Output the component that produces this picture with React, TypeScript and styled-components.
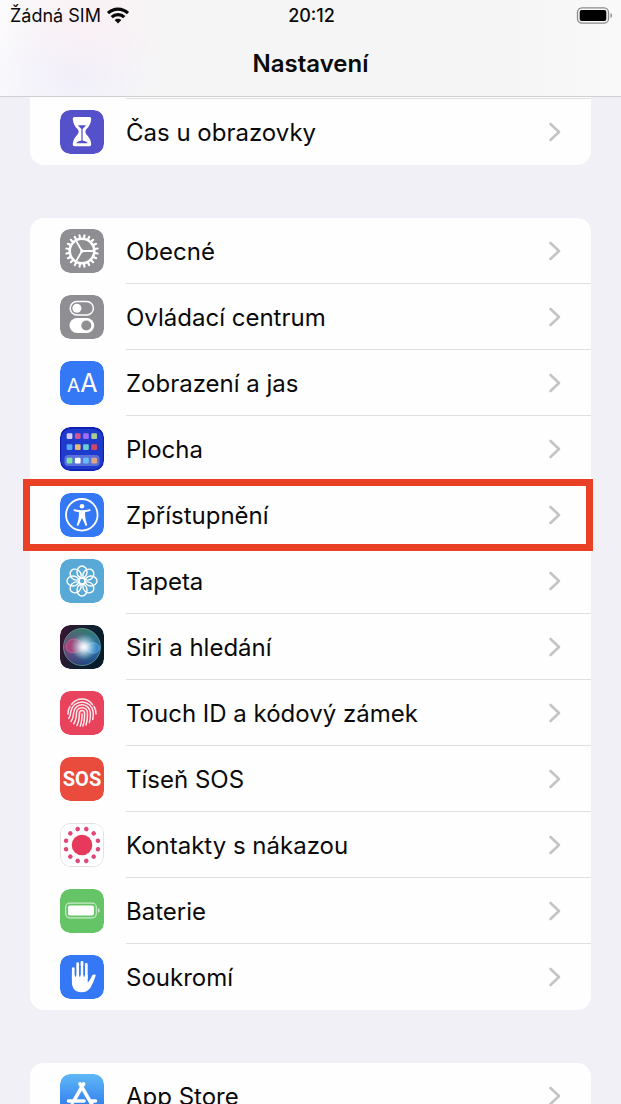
import React from "react";
import styled, { createGlobalStyle } from "styled-components";

const GlobalStyle = createGlobalStyle`
  *, *::before, *::after { box-sizing: border-box; }
  body {
    margin: 0;
    background: #f1f0f6;
    color: #0a0a0a;
    font-family: Inter, "Noto Sans", sans-serif;
  }
`;

const Screen = styled.div`
  display: flex;
  flex-direction: column;
  height: 100vh;
  overflow: hidden;
`;

const Header = styled.header`
  flex: none;
  background:
    radial-gradient(ellipse 90px 70px at 90px 20px, rgba(252, 236, 242, 0.6), transparent),
    radial-gradient(ellipse 90px 70px at 72px 76px, rgba(238, 236, 250, 0.8), transparent),
    linear-gradient(90deg, #fbfafc, #f5f5f5 30%, #f5f5f5 80%, #f9f9fa);
  border-bottom: 1px solid #cfcfd4;
`;

const StatusBar = styled.div`
  display: grid;
  grid-template-columns: 1fr auto 1fr;
  align-items: center;
  height: 32px;
  padding: 0 8px 0 10px;
  font-size: 18px;
  line-height: 20px;
`;

const Carrier = styled.span`
  display: flex;
  align-items: center;
  gap: 5px;
`;

const Clock = styled.time`
  font-weight: 500;
`;

const BatteryStatus = styled.span`
  display: flex;
  justify-content: flex-end;
`;

const Title = styled.h1`
  margin: 0;
  padding: 17px 0;
  font-size: 24px;
  line-height: 30px;
  font-weight: 600;
  text-align: center;
`;

const Content = styled.main`
  flex: 1;
  min-height: 0;
  overflow-y: auto;
  scrollbar-width: none;
  padding: 0 30px;
  display: flex;
  flex-direction: column;
  gap: 53px;
`;

const Group = styled.ul<{ $continued?: boolean }>`
  flex: none;
  margin: 0;
  padding: ${(p) => (p.$continued ? "2px 0 0" : "0")};
  list-style: none;
  background: #fefefe;
  border-radius: ${(p) => (p.$continued ? "0 0 14px 14px" : "14px")};
`;

const Item = styled.li`
  position: relative;
`;

const RowLink = styled.a`
  display: flex;
  height: 66px;
  padding-left: 30px;
  gap: 22px;
  align-items: center;
  color: inherit;
  text-decoration: none;
`;

const RowBody = styled.span<{ $line?: boolean }>`
  flex: 1;
  align-self: stretch;
  display: flex;
  align-items: center;
  justify-content: space-between;
  padding-right: 30px;
  box-shadow: ${(p) => (p.$line ? "0 -1px #e0e0e2" : "none")};
`;

const Label = styled.span`
  padding-top: 2px;
  font-size: 24px;
  line-height: 30px;
`;

const Highlight = styled.div`
  position: absolute;
  z-index: 1;
  inset: -3px -2px -3px -7px;
  border: 7px solid #ea4025;
  pointer-events: none;
`;

const IconSvg = styled.svg`
  flex: none;
  display: block;
  width: 44px;
  height: 44px;
  border-radius: 10px;
`;

const Tile = ({ bg, children }: { bg: string; children: React.ReactNode }) => (
  <IconSvg viewBox="0 0 44 44" aria-hidden="true">
    <rect width="44" height="44" rx="10" fill={bg} />
    {children}
  </IconSvg>
);

const around = (count: number, offset = 0) =>
  Array.from({ length: count }, (_, i) => offset + (i * 360) / count);

const ScreenTimeIcon = () => (
  <Tile bg="#5451ca">
    <path
      d="M14.500 7h15c1.300 0 1.900 1 1.700 2.300-.5 4.700-2.300 7.300-4.700 9.800-1.500 1.600-1.500 3.800 0 5.400 2.400 2.500 4.200 4.900 4.700 9.200.2 1.400-.4 2.500-1.700 2.500h-15c-1.300 0-1.900-1.100-1.700-2.500.5-4.300 2.300-6.700 4.700-9.200 1.500-1.600 1.500-3.800 0-5.400-2.400-2.500-4.200-5.100-4.700-9.800C12.600 8 13.200 7 14.500 7z"
      fill="#fff"
    />
    <path d="M18 15.200h8c-.8 1.500-2.600 2.300-3.200 4v11.200c2 .5 4.200 1 5 2.800H16.200c.8-1.800 3-2.300 5-2.800V19.200c-.6-1.700-2.400-2.500-3.200-4z" fill="#5451ca" />
    <path d="M22 18.500v12" stroke="#fff" strokeWidth=".5" />
  </Tile>
);

const GeneralIcon = () => (
  <Tile bg="#8e8e93">
    <g stroke="#fff" fill="none">
      <circle cx="22" cy="22" r="12.300" strokeWidth="2.600" />
      {around(20, 9).map((a) => (
        <path key={a} d="M22 9V6.200" strokeWidth="2.200" strokeLinecap="round" transform={`rotate(${a} 22 22)`} />
      ))}
      <path d="M22 22h12M22 22l-6-10.400M22 22l-6 10.400" strokeWidth="1.800" />
    </g>
    <circle cx="22" cy="22" r="1.800" fill="#fff" />
  </Tile>
);

const ControlCentreIcon = () => (
  <Tile bg="#8e8e93">
    <rect x="10.200" y="6.600" width="23.200" height="13.400" rx="6.700" fill="none" stroke="#fff" strokeWidth="1.500" />
    <circle cx="16.900" cy="13.300" r="4.500" fill="#fff" />
    <rect x="9.500" y="23" width="24.700" height="15" rx="7.500" fill="#fff" />
    <circle cx="26.300" cy="30.500" r="5" fill="#8e8e93" />
  </Tile>
);

const DisplayIcon = () => (
  <Tile bg="#3478f6">
    <g fill="#fff" fontFamily="Inter, sans-serif" textAnchor="middle">
      <text x="13.500" y="31" fontSize="19">A</text>
      <text x="28.800" y="31" fontSize="25">A</text>
    </g>
  </Tile>
);

const homeTiles = [
  { y: 6.3, colors: ["#cfd0ff", "#d2568f", "#a06cf6", "#a8cf92"] },
  { y: 17.3, colors: ["#55a8fb", "#e9b872", "#6bcfd0", "#cf4763"] },
  { y: 30.7, colors: ["#7ee3a4", "#ffffff", "#68bdfb", "#e0a684"] },
];

const HomeScreenIcon = () => (
  <Tile bg="#0f1fb4">
    <rect x="1.200" y="2" width="41.600" height="40.500" rx="9" fill="#1f3bcb" />
    <rect x="4.500" y="28" width="35" height="11" rx="3.500" fill="#5a70da" />
    {homeTiles.map((row) =>
      row.colors.map((c, i) => (
        <rect key={c} x={6.7 + i * 8.2} y={row.y} width="5.700" height="5.700" rx="1.200" fill={c} />
      )),
    )}
  </Tile>
);

const AccessibilityIcon = () => (
  <Tile bg="#3478f6">
    <circle cx="21.800" cy="21.800" r="15.800" fill="none" stroke="#fff" strokeWidth="1.800" />
    <circle cx="22" cy="13.200" r="2.300" fill="#fff" />
    <path
      d="M14.300 16.300c2.600.6 5 1 7.700 1s5.100-.4 7.700-1c1.100-.2 1.300 1.300.2 1.600-1.700.5-3.300.8-4.800 1.100v3.500c.3 3.200.9 6.100 2 9.100.4 1.200-1.200 1.700-1.700.6L22.300 25.500h-.6l-3.100 6.700c-.5 1.100-2.100.6-1.700-.6 1.100-3 1.700-5.900 2-9.100V19c-1.500-.3-3.100-.6-4.800-1.100-1.100-.3-.9-1.800.2-1.600z"
      fill="#fff"
    />
  </Tile>
);

const WallpaperIcon = () => (
  <Tile bg="#59a9d6">
    <g fill="none" stroke="#fff" strokeWidth="1.400">
      {around(8).map((a) => (
        <ellipse key={a} cx="22" cy="13" rx="5" ry="6" transform={`rotate(${a} 22 22)`} />
      ))}
      <circle cx="22" cy="22" r="3" />
    </g>
  </Tile>
);

const SiriIcon = () => (
  <IconSvg viewBox="0 0 44 44" aria-hidden="true">
    <defs>
      <linearGradient id="siriBg" x1="0" y1="0" x2="1" y2=".3">
        <stop offset="0" stopColor="#3b1430" />
        <stop offset=".5" stopColor="#192032" />
        <stop offset="1" stopColor="#071c2b" />
      </linearGradient>
      <linearGradient id="siriOrb" x1="0" y1=".4" x2="1" y2=".6">
        <stop offset="0" stopColor="#a52362" />
        <stop offset=".4" stopColor="#74517d" />
        <stop offset=".65" stopColor="#387294" />
        <stop offset="1" stopColor="#1d60ac" />
      </linearGradient>
      <linearGradient id="siriTop" x1="0" y1="0" x2="0" y2="1">
        <stop offset="0" stopColor="#2a7e62" stopOpacity=".85" />
        <stop offset=".5" stopColor="#3c7aa0" stopOpacity=".3" />
        <stop offset="1" stopColor="#1b2f72" stopOpacity=".75" />
      </linearGradient>
      <radialGradient id="siriGlow">
        <stop offset="0" stopColor="#fff" />
        <stop offset=".3" stopColor="#eefaff" stopOpacity=".8" />
        <stop offset="1" stopColor="#9be2ed" stopOpacity="0" />
      </radialGradient>
    </defs>
    <rect width="44" height="44" rx="10" fill="url(#siriBg)" />
    <circle cx="22" cy="22" r="18.500" fill="url(#siriOrb)" />
    <circle cx="22" cy="22" r="18.500" fill="url(#siriTop)" stroke="#68a99f" strokeOpacity=".7" strokeWidth="1" />
    <path d="M25 23C20 11 7 12 6 21c0 9 11 8 19 2z" fill="#d73e78" fillOpacity=".5" stroke="#e77fa8" strokeOpacity=".6" strokeWidth=".8" />
    <path d="M24 23c5-7 14-7 15.500 0-2 7-9 7-15.500 0z" fill="#4499e4" fillOpacity=".6" stroke="#8cc6f0" strokeOpacity=".6" strokeWidth=".8" />
    <circle cx="24" cy="22" r="13" fill="url(#siriGlow)" />
  </IconSvg>
);

const TouchIdIcon = () => (
  <Tile bg="#e9425c">
    <g fill="none" stroke="#ffe9ec" strokeWidth="1.500" strokeLinecap="round">
      <path d="M11.500 13.500C14 10 17.800 8 22 8s8 2 10.500 5.500" />
      <path d="M8 23c0-3 .6-5.400 2-7.600M36 23c0-3-.6-5.400-2-7.600" />
      <path d="M8.700 27.500c2-2.500 1.700-4.500 2-6.500C11.500 15 16.200 10.900 22 10.900S32.500 15 33.200 21c.2 2.500.2 5-.5 7.500" />
      <path d="M11 30.500c2.300-3 2.500-5.500 2.600-8.500.2-4.800 3.900-8.200 8.400-8.200s8.200 3.400 8.400 8.200c.1 3.300 0 6.300-1 9.500" />
      <path d="M13.800 32.800c2.500-4 2.600-7 2.700-10.800.1-3.200 2.500-5.300 5.500-5.300s5.400 2.100 5.500 5.300c.1 4.500-.2 8.300-1.500 12" />
      <path d="M17 34.500c2.300-4.500 2.400-8 2.400-12 0-1.800 1.100-2.900 2.600-2.900s2.600 1.100 2.600 2.900c0 4.500-.1 8.500-1.700 12.500" />
      <path d="M22 23c0 4.500-.2 8.500-1.800 12.300" />
    </g>
  </Tile>
);

const SosIcon = () => (
  <Tile bg="#e94b3c">
    <text x="22" y="29" fill="#fff" fontFamily="Roboto, sans-serif" fontWeight="700" fontSize="20" textAnchor="middle">
      SOS
    </text>
  </Tile>
);

const ExposureIcon = () => (
  <IconSvg viewBox="0 0 44 44" aria-hidden="true">
    <rect x=".5" y=".5" width="43" height="43" rx="9.500" fill="#fff" stroke="#e2e2e4" />
    <circle cx="22" cy="22" r="10.300" fill="#e6395c" />
    {around(12, 15).map((a) => (
      <circle key={a} cx="22" cy="5.500" r="2.300" fill="#dd4a78" transform={`rotate(${a} 22 22)`} />
    ))}
  </IconSvg>
);

const BatteryIcon = () => (
  <Tile bg="#65c466">
    <rect x="5.700" y="14.200" width="30.600" height="14.600" rx="4" fill="none" stroke="#c9ebc9" strokeWidth="1.200" />
    <rect x="8" y="16.500" width="26" height="10" rx="2" fill="#fff" />
    <path d="M38 19c2.200.8 2.200 4.200 0 5z" fill="#c9ebc9" />
  </Tile>
);

const PrivacyIcon = () => (
  <Tile bg="#3478f6">
    <g stroke="#fff" strokeWidth="2.800" strokeLinecap="round" fill="none">
      <path d="M13.300 24V13.600M17.700 22V8.700M22 22V7.500M26.300 23V9.500" />
    </g>
    <path
      d="M11.900 20h15.800v7.500c1.600-1.300 2.600-3.400 3.800-5.800.7-1.500 1.900-2.400 3.400-2.100 1 .2.900 1 .5 1.900-1.700 3.800-2.700 8.100-5.200 11.500-2 2.800-4.700 4.200-8.700 4.200-6.300 0-9.600-3.700-9.600-10.200z"
      fill="#fff"
    />
    <path d="M15.500 13.500V21M19.850 11v10M24.150 11v10" stroke="#3478f6" strokeWidth="1.300" strokeLinecap="round" />
  </Tile>
);

const AppStoreIcon = () => (
  <IconSvg viewBox="0 0 44 44" aria-hidden="true">
    <defs>
      <linearGradient id="storeBg" x1="0" y1="0" x2="0" y2="1">
        <stop offset="0" stopColor="#60b9f7" />
        <stop offset="1" stopColor="#2369ea" />
      </linearGradient>
    </defs>
    <rect width="44" height="44" rx="10" fill="url(#storeBg)" />
    <g stroke="#fff" strokeWidth="3.600" strokeLinecap="round">
      <path d="M23.600 9.800L14.300 26M20 9.800l13 22.500M8.500 27h15.500M29.800 27h5.700M12.300 30.300l-1.200 2" />
    </g>
  </IconSvg>
);

const Chevron = () => (
  <svg width="13" height="20" viewBox="0 0 13 20" fill="none" aria-hidden="true">
    <path d="M2.500 2L11 10l-8.500 8" stroke="#c4c4c7" strokeWidth="2.600" strokeLinecap="round" strokeLinejoin="round" />
  </svg>
);

const WifiGlyph = () => (
  <svg width="24" height="18" viewBox="0 0 24 18" fill="none" aria-label="Wi-Fi">
    <g stroke="#0a0a0a" strokeWidth="3.200">
      <path d="M2 6.200C7.700.7 16.300.7 22 6.200" />
      <path d="M5.700 10.200c3.500-3.400 9.100-3.400 12.600 0" />
    </g>
    <path d="M8.600 13c1.900-1.800 4.900-1.800 6.800 0L12 16.600z" fill="#0a0a0a" />
  </svg>
);

const BatteryGlyph = () => (
  <svg width="37" height="20" viewBox="0 0 37 20" aria-label="Baterie">
    <rect x="1.500" y="1.800" width="31" height="15.400" rx="4.500" fill="none" stroke="#8a8a8c" strokeWidth="1.300" />
    <rect x="3.700" y="4" width="26.600" height="11" rx="2" fill="#000" />
    <path d="M34.500 7c2 .7 2 4.300 0 5z" fill="#8a8a8c" />
  </svg>
);

interface Entry {
  label: string;
  Icon: React.ComponentType;
  highlighted?: boolean;
}

const groups: { continued?: boolean; entries: Entry[] }[] = [
  { continued: true, entries: [{ label: "Čas u obrazovky", Icon: ScreenTimeIcon }] },
  {
    entries: [
      { label: "Obecné", Icon: GeneralIcon },
      { label: "Ovládací centrum", Icon: ControlCentreIcon },
      { label: "Zobrazení a jas", Icon: DisplayIcon },
      { label: "Plocha", Icon: HomeScreenIcon },
      { label: "Zpřístupnění", Icon: AccessibilityIcon, highlighted: true },
      { label: "Tapeta", Icon: WallpaperIcon },
      { label: "Siri a hledání", Icon: SiriIcon },
      { label: "Touch ID a kódový zámek", Icon: TouchIdIcon },
      { label: "Tíseň SOS", Icon: SosIcon },
      { label: "Kontakty s nákazou", Icon: ExposureIcon },
      { label: "Baterie", Icon: BatteryIcon },
      { label: "Soukromí", Icon: PrivacyIcon },
    ],
  },
  { entries: [{ label: "App Store", Icon: AppStoreIcon }] },
];

export default function App() {
  return (
    <Screen>
      <GlobalStyle />
      <Header>
        <StatusBar>
          <Carrier>
            Žádná SIM
            <WifiGlyph />
          </Carrier>
          <Clock>20:12</Clock>
          <BatteryStatus>
            <BatteryGlyph />
          </BatteryStatus>
        </StatusBar>
        <Title>Nastavení</Title>
      </Header>
      <Content>
        {groups.map((group, g) => (
          <Group key={g} $continued={group.continued}>
            {group.entries.map(({ label, Icon, highlighted }, i) => (
              <Item key={label}>
                <RowLink href="#">
                  <Icon />
                  <RowBody $line={i > 0 || group.continued}>
                    <Label>{label}</Label>
                    <Chevron />
                  </RowBody>
                </RowLink>
                {highlighted && <Highlight />}
              </Item>
            ))}
          </Group>
        ))}
      </Content>
    </Screen>
  );
}
